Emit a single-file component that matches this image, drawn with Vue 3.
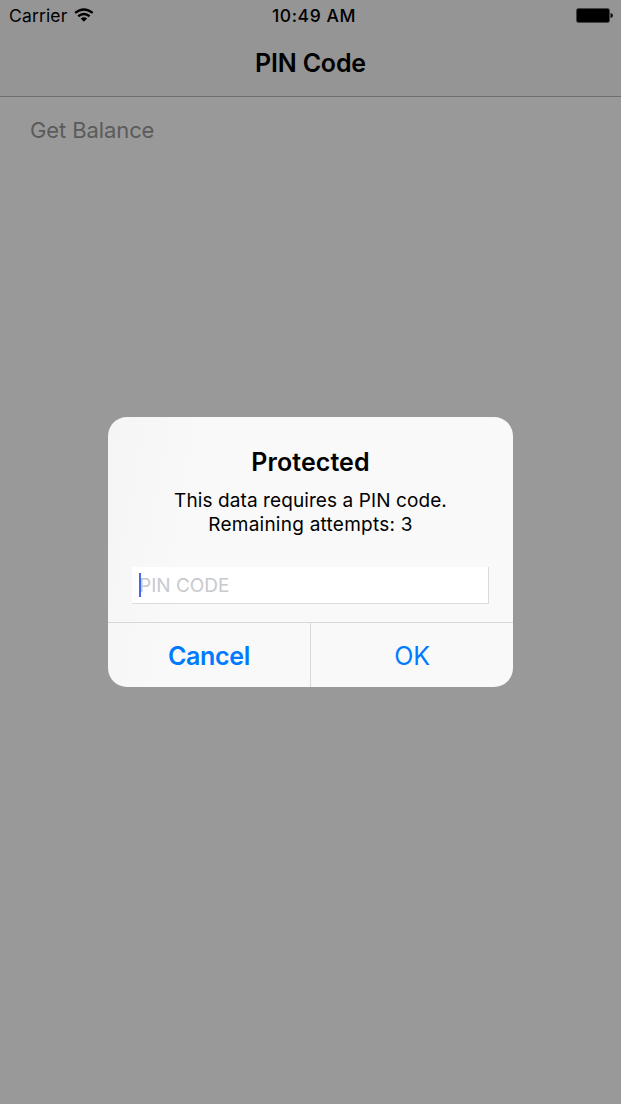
<script setup>
import { ref } from 'vue'

const status = ref({ carrier: 'Carrier', time: '10:49 AM' })
const attempts = ref(3)
</script>

<template>
  <div class="screen">
    <header class="bar">
      <div class="status">
        <div class="network">
          <span class="carrier">{{ status.carrier }}</span>
          <svg class="wifi" width="20" height="15" viewBox="0 0 20 15">
            <g fill="none" stroke="#000" stroke-width="2.4">
              <path d="M1.1 4.9 Q9.9 -2.1 18.7 4.9" />
              <path d="M4.2 8.3 Q9.9 3.7 15.6 8.3" />
            </g>
            <path d="M6.7 10.6 Q9.9 7.9 13.1 10.6 L9.9 13.8 Z" fill="#000" />
          </svg>
        </div>
        <span class="time">{{ status.time }}</span>
        <svg class="battery" width="37" height="15" viewBox="0 0 37 15">
          <rect x="0.5" y="0.5" width="33" height="14" rx="2" fill="#000" stroke="#444" />
          <path d="M34.5 5 Q37 5.3 37 7.5 Q37 9.7 34.5 10 Z" fill="#111" />
        </svg>
      </div>
      <h1 class="title"><span>PIN Code</span></h1>
    </header>
    <main class="content">
      <span class="balance">Get Balance</span>
    </main>
    <div class="overlay">
      <section class="alert" role="dialog">
        <div class="body">
          <h2 class="heading"><span>Protected</span></h2>
          <p class="message">
            <span class="line first">This data requires a PIN code.</span>
            <span class="line second">Remaining attempts: {{ attempts }}</span>
          </p>
          <div class="field">
            <i class="caret"></i>
            <span class="placeholder">PIN CODE</span>
          </div>
        </div>
        <div class="actions">
          <button class="action cancel">Cancel</button>
          <button class="action ok">OK</button>
        </div>
      </section>
    </div>
  </div>
</template>

<style>
body {
  margin: 0;
}
</style>

<style scoped>
.screen {
  position: relative;
  width: 621px;
  height: 1104px;
  overflow: hidden;
  background: #999;
  color: #000;
  font-family: Inter, "Liberation Sans", sans-serif;
}
.bar {
  box-sizing: border-box;
  height: 97px;
  border-bottom: 1px solid #6d6d6d;
  background: #959595;
}
.status {
  display: grid;
  grid-template-columns: 1fr auto 1fr;
  align-items: center;
  height: 31px;
  padding: 0 8px 0 9px;
  box-sizing: border-box;
}
.network {
  display: flex;
  align-items: center;
  gap: 7px;
}
.carrier {
  font-size: 17.5px;
  letter-spacing: 0.15px;
}
.time {
  font-size: 17.5px;
  font-weight: 500;
  letter-spacing: 0.6px;
  padding-left: 6px;
}
.battery {
  justify-self: end;
}
.title {
  margin: 0;
  line-height: 64px;
  font-size: 25px;
  font-weight: 600;
  letter-spacing: -0.2px;
  text-align: center;
}
.content {
  padding: 17px 30px;
  line-height: 32px;
}
.balance {
  font-size: 22px;
  letter-spacing: -0.1px;
  color: #5b5b5b;
}
.overlay {
  position: absolute;
  inset: 0;
  display: flex;
  align-items: center;
  justify-content: center;
}
.alert {
  width: 405px;
  height: 270px;
  border-radius: 19px;
  overflow: hidden;
  background: linear-gradient(100deg, #f5f5f5, #f9f9f9 22%);
}
.body {
  box-sizing: border-box;
  height: 205px;
  padding: 29px 24px 0;
}
.heading {
  margin: 0;
  line-height: 32px;
  font-size: 25px;
  font-weight: 600;
  letter-spacing: 0.08px;
  text-align: center;
}
.message {
  margin: 11px 0 0;
  font-size: 19px;
  line-height: 24px;
  text-align: center;
}
.line {
  display: block;
}
.first {
  letter-spacing: 0.09px;
}
.second {
  letter-spacing: 0.24px;
}
.field {
  display: flex;
  align-items: center;
  box-sizing: border-box;
  width: 357px;
  height: 37px;
  margin-top: 30px;
  padding-left: 7px;
  background: #fff;
  border-right: 1px solid #dbdbdd;
  border-bottom: 1px solid #dbdbdd;
}
.caret {
  width: 2px;
  height: 24px;
  margin-right: -2px;
  background: #4169e8;
  z-index: 1;
}
.placeholder {
  font-size: 19px;
  color: #c9c9ce;
}
.actions {
  display: flex;
  height: 65px;
  box-sizing: border-box;
  border-top: 1px solid #d8d8da;
}
.action {
  flex: 1;
  margin: 0;
  padding: 2px 0 0;
  border: 0;
  background: none;
  color: #007aff;
  font-family: inherit;
  font-size: 25px;
}
.cancel {
  font-weight: 600;
  letter-spacing: -0.3px;
}
.ok {
  border-left: 1px solid #d8d8da;
  letter-spacing: -0.3px;
}
</style>
